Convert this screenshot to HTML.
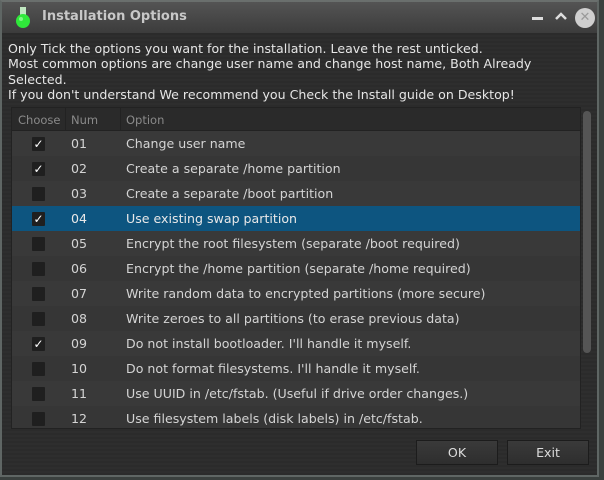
<!DOCTYPE html>
<html><head><style>
*{margin:0;padding:0;box-sizing:border-box}
body{width:604px;height:480px;background:#3a403e;position:relative;overflow:hidden;font-family:"DejaVu Sans","Liberation Sans",sans-serif}
.win{position:absolute;left:0;top:0;width:599px;height:477px;background:#2c2c2c;border:2px solid #5f6664;border-top-color:#6a6f6d}
.title{position:absolute;left:0;top:0;width:100%;height:31px;background:linear-gradient(#545454,#3c3c3c);}
.title .t{position:absolute;left:40px;top:7px;color:#c8c8c8;font-weight:bold;font-size:13px}
.body{position:absolute;left:0;top:31px;right:0;bottom:0;background:repeating-linear-gradient(#2b2b2b 0 2px,#2e2e2e 2px 4px)}
.msg{position:absolute;left:8px;top:41px;color:#e6e6e6;font-size:12.6px;line-height:15.3px}
.tbl{position:absolute;left:11px;top:107px;width:570px;height:322px;background:#2f2f2f;border:1px solid #222;overflow:hidden}
.hdr{height:23px;background:#2a2a2a;color:#8a8a8a;font-size:11.5px;position:relative;border-bottom:1px solid #222}
.hdr span{position:absolute;top:5px}
.row{height:25px;position:relative;color:#d4d4d4;font-size:12.6px}
.row:nth-child(even){background:#363636}.row:nth-child(odd){background:#393939}
.row.sel{background:#0d5580;color:#e8e8e8}
.row span{position:absolute;top:5px}
.cb{position:absolute;left:20px;top:6px;width:13px;height:14px;background:#1f1f1f;border-radius:1px;color:#fff;font-size:12px;line-height:14px;text-align:center}
.sb{position:absolute;left:583px;top:111px;width:8px;height:242px;background:#555;border-radius:4px}
.btn{position:absolute;top:440px;width:82px;height:25px;background:linear-gradient(#3a3a3a,#2e2e2e);border:1px solid #1c1c1c;color:#dcdcdc;font-size:12.6px;text-align:center;line-height:23px}
</style></head><body>
<div class="win">
<div class="title">
<svg style="position:absolute;left:11px;top:4px" width="20" height="24" viewBox="0 0 20 24"><rect x="7" y="1" width="6" height="8" fill="#bfe6c0"/><circle cx="10" cy="15" r="7" fill="#2fe83a"/><circle cx="8" cy="13" r="2" fill="#7ff784"/></svg>
<div class="t">Installation Options</div>
<div style="position:absolute;left:530px;top:15px;width:11px;height:3px;background:#ddd"></div>
<svg style="position:absolute;left:552px;top:9px" width="14" height="10"><path d="M2 8 L7 3 L12 8" stroke="#ddd" stroke-width="2.5" fill="none"/></svg>
<div style="position:absolute;left:573px;top:6px;width:20px;height:20px;border-radius:50%;background:#cfcfcf;color:#999;font-size:13px;font-weight:bold;text-align:center;line-height:20px">✕</div>
</div>
<div class="body"></div>
</div>
<div class="msg">Only Tick the options you want for the installation. Leave the rest unticked.<br>Most common options are change user name and change host name, Both Already<br>Selected.<br>If you don't understand We recommend you Check the Install guide on Desktop!</div>
<div class="tbl">
<div class="hdr"><span style="left:6px">Choose</span><span style="left:59px">Num</span><span style="left:114px">Option</span>
<div style="position:absolute;left:53px;top:0;width:1px;height:23px;background:#222"></div><div style="position:absolute;left:108px;top:0;width:1px;height:23px;background:#222"></div></div>
<div>
<div class="row"><div class="cb">✓</div><span style="left:59px">01</span><span style="left:114px">Change user name</span></div>
<div class="row"><div class="cb">✓</div><span style="left:59px">02</span><span style="left:114px">Create a separate /home partition</span></div>
<div class="row"><div class="cb"></div><span style="left:59px">03</span><span style="left:114px">Create a separate /boot partition</span></div>
<div class="row sel"><div class="cb">✓</div><span style="left:59px">04</span><span style="left:114px">Use existing swap partition</span></div>
<div class="row"><div class="cb"></div><span style="left:59px">05</span><span style="left:114px">Encrypt the root filesystem (separate /boot required)</span></div>
<div class="row"><div class="cb"></div><span style="left:59px">06</span><span style="left:114px">Encrypt the /home partition (separate /home required)</span></div>
<div class="row"><div class="cb"></div><span style="left:59px">07</span><span style="left:114px">Write random data to encrypted partitions (more secure)</span></div>
<div class="row"><div class="cb"></div><span style="left:59px">08</span><span style="left:114px">Write zeroes to all partitions (to erase previous data)</span></div>
<div class="row"><div class="cb">✓</div><span style="left:59px">09</span><span style="left:114px">Do not install bootloader. I'll handle it myself.</span></div>
<div class="row"><div class="cb"></div><span style="left:59px">10</span><span style="left:114px">Do not format filesystems. I'll handle it myself.</span></div>
<div class="row"><div class="cb"></div><span style="left:59px">11</span><span style="left:114px">Use UUID in /etc/fstab. (Useful if drive order changes.)</span></div>
<div class="row"><div class="cb"></div><span style="left:59px">12</span><span style="left:114px">Use filesystem labels (disk labels) in /etc/fstab.</span></div>
</div></div>
<div class="sb"></div>
<div class="btn" style="left:416px">OK</div>
<div class="btn" style="left:507px">Exit</div>
</body></html>
